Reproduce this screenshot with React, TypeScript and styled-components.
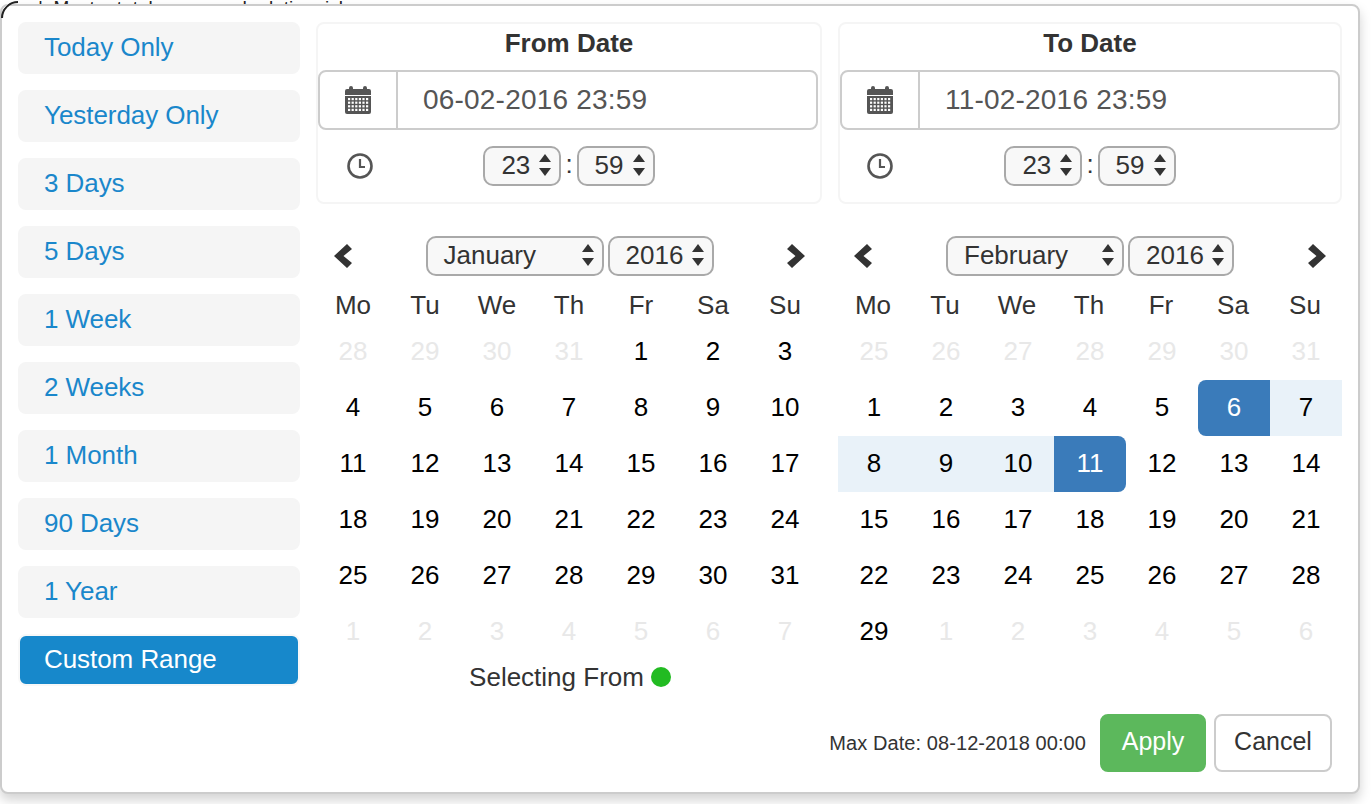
import React from 'react';
import styled, { createGlobalStyle } from 'styled-components';

type DayState = 'off' | 'normal' | 'start' | 'range' | 'end';

interface Day {
  label: number;
  state: DayState;
}

const GlobalStyle = createGlobalStyle`
  html, body {
    margin: 0;
    padding: 0;
    height: 100%;
    background: #fff;
    overflow: hidden;
  }
  body {
    font-family: "Liberation Sans", Arial, sans-serif;
    font-size: 26px;
    color: #333;
  }
`;

const Page = styled.div`
  position: relative;
  height: 804px;
  padding-top: 4px;
  box-sizing: border-box;
`;

/* page content sticking out from under the popup */
const Backdrop = styled.div`
  position: absolute;
  left: 38px;
  top: -3px;
  font-size: 19px;
  line-height: 22px;
  white-space: pre;
  color: #222;
`;

const BackdropBadge = styled.span`
  position: absolute;
  z-index: 1;
  left: 1px;
  top: 1px;
  width: 34px;
  height: 34px;
  box-sizing: border-box;
  border: 2.5px solid transparent;
  border-top-color: #222;
  border-radius: 50%;
  transform: rotate(-45deg);
`;

const Popup = styled.div`
  position: relative;
  width: 1360px;
  height: 790px;
  box-sizing: border-box;
  display: flex;
  gap: 16px;
  padding: 16px;
  background: #fff;
  border: 2px solid #ccc;
  border-radius: 8px;
  box-shadow: 0 6px 12px rgba(0, 0, 0, 0.175);
`;

const Sidebar = styled.div`
  width: 282px;
  flex-shrink: 0;
  display: flex;
  flex-direction: column;
  gap: 16px;
`;

const RangeItem = styled.div<{ $active?: boolean }>`
  height: 52px;
  box-sizing: border-box;
  display: flex;
  align-items: center;
  padding: 0 0 2px 24px;
  letter-spacing: -0.06px;
  border: 2px solid ${({ $active }) => ($active ? '#f8f8f8' : '#f5f5f5')};
  border-radius: 8px;
  background: ${({ $active }) => ($active ? '#1788cb' : '#f5f5f5')};
  color: ${({ $active }) => ($active ? '#fff' : '#1a87cb')};
`;

const Main = styled.div`
  flex: 1;
  display: flex;
  flex-direction: column;
`;

const Calendars = styled.div`
  display: flex;
  gap: 16px;
`;

const Calendar = styled.div<{ $first?: boolean }>`
  width: ${({ $first }) => ($first ? '506px' : '504px')};
  display: flex;
  flex-direction: column;
`;

const DatePanel = styled.div`
  height: 182px;
  box-sizing: border-box;
  border: 2px solid #f5f5f5;
  border-radius: 8px;
  display: flex;
  flex-direction: column;
  margin-bottom: 32px;
`;

const PanelTitle = styled.div`
  height: 46px;
  padding-bottom: 8px;
  box-sizing: border-box;
  display: flex;
  align-items: center;
  justify-content: center;
  font-weight: bold;
`;

const InputGroup = styled.div`
  width: 500px;
  height: 60px;
  box-sizing: border-box;
  display: flex;
  border: 2px solid #ccc;
  border-radius: 8px;
`;

const InputAddon = styled.div`
  width: 76px;
  flex-shrink: 0;
  display: flex;
  align-items: center;
  justify-content: center;
  border-right: 2px solid #ccc;
`;

const InputValue = styled.div`
  flex: 1;
  display: flex;
  align-items: center;
  padding-left: 25px;
  font-size: 28px;
  letter-spacing: 0.2px;
  color: #555;
`;

const TimeRow = styled.div`
  display: grid;
  grid-template-columns: 80px 1fr 80px;
  align-items: center;
  margin-top: 16px;
`;

const ClockCell = styled.div<{ $first?: boolean }>`
  display: flex;
  justify-content: center;
  padding-left: ${({ $first }) => ($first ? '4px' : '0')};
`;

const TimePicker = styled.div`
  display: flex;
  justify-content: center;
  align-items: center;
  gap: 4px;
`;

const Colon = styled.span`
  line-height: 36px;
  padding-bottom: 4px;
`;

const SelectBox = styled.div<{ $width: number }>`
  width: ${({ $width }) => $width}px;
  height: 40px;
  box-sizing: border-box;
  display: flex;
  align-items: center;
  justify-content: space-between;
  padding: 0 8px 2px 16px;
  border: 2px solid #a9a9a9;
  border-radius: 10px;
  background: #f8f8f8;
  color: #333;
`;

const NavRow = styled.div<{ $first?: boolean }>`
  height: 40px;
  display: grid;
  grid-template-columns: 1fr auto 1fr;
  align-items: center;
  padding: ${({ $first }) => ($first ? '0 17px 0 18px' : '0 16px')};
`;

const NavButton = styled.div<{ $end?: boolean }>`
  display: flex;
  justify-content: ${({ $end }) => ($end ? 'flex-end' : 'flex-start')};
`;

const NavSelects = styled.div`
  display: flex;
  gap: 4px;
`;

const DayGrid = styled.div<{ $first?: boolean }>`
  display: grid;
  grid-template-columns: repeat(7, 72px);
  grid-auto-rows: 56px;
  margin-top: 8px;
  margin-left: ${({ $first }) => ($first ? '1px' : '0')};
`;

const WeekRow = styled.div`
  display: grid;
  grid-template-columns: repeat(7, 72px);
  height: 40px;
  margin-top: 9px;
  margin-bottom: -9px;
`;

const WeekDay = styled.div<{ $first?: boolean }>`
  display: flex;
  align-items: center;
  justify-content: center;
  color: #333;
  padding: ${({ $first }) => ($first ? '0 0 0 2px' : '0 2px 0 0')};
`;

const dayBackground: Record<DayState, string> = {
  off: 'transparent',
  normal: 'transparent',
  start: '#3a7bba',
  end: '#3a7bba',
  range: '#e9f2f9',
};

const dayColor: Record<DayState, string> = {
  off: '#e8e8e8',
  normal: '#000',
  start: '#fff',
  end: '#fff',
  range: '#000',
};

const dayRadius: Record<DayState, string> = {
  off: '0',
  normal: '0',
  start: '8px 0 0 8px',
  end: '0 8px 8px 0',
  range: '0',
};

const DayCell = styled.div<{ $state: DayState }>`
  display: flex;
  align-items: center;
  justify-content: center;
  padding-bottom: 2px;
  box-sizing: border-box;
  background: ${({ $state }) => dayBackground[$state]};
  color: ${({ $state }) => dayColor[$state]};
  border-radius: ${({ $state }) => dayRadius[$state]};
`;

const Status = styled.div`
  height: 34px;
  display: flex;
  align-items: center;
  justify-content: center;
  gap: 7px;
  width: 504px;
  padding-left: 2px;
  box-sizing: border-box;
  margin-left: 1px;
`;

const StatusDot = styled.span`
  width: 20px;
  height: 20px;
  border-radius: 50%;
  background: #22bb22;
`;

const Footer = styled.div`
  display: flex;
  justify-content: flex-end;
  align-items: center;
  margin-top: auto;
  margin-bottom: 4px;
  padding-right: 10px;
`;

const MaxDate = styled.span`
  font-size: 20px;
  letter-spacing: 0.08px;
  margin-right: 14px;
`;

const ActionButton = styled.div<{ $primary?: boolean }>`
  height: 58px;
  box-sizing: border-box;
  display: flex;
  align-items: center;
  justify-content: center;
  padding-bottom: 4px;
  font-size: 25px;
  width: ${({ $primary }) => ($primary ? '106px' : '118px')};
  margin-left: ${({ $primary }) => ($primary ? '0' : '8px')};
  border: 2px solid ${({ $primary }) => ($primary ? '#5cb85c' : '#ccc')};
  border-radius: 8px;
  background: ${({ $primary }) => ($primary ? '#5cb85c' : '#fff')};
  color: ${({ $primary }) => ($primary ? '#fff' : '#333')};
`;

const CalendarIcon = () => (
  <svg width="26" height="28" viewBox="0 0 26 28" fill="#555">
    <path d="M2 3h2V2a2 2 0 0 1 4 0v1h10V2a2 2 0 0 1 4 0v1h2a2 2 0 0 1 2 2v4H0V5a2 2 0 0 1 2-2z" />
    <path d="M0 10h26v16a2 2 0 0 1-2 2H2a2 2 0 0 1-2-2z" />
    {[0, 1, 2, 3].map((row) =>
      [0, 1, 2, 3, 4, 5].map((col) => (
        <rect key={`${row}-${col}`} x={3 + col * 3.6} y={12 + row * 3.6} width="2.2" height="2.2" fill="#fff" />
      ))
    )}
  </svg>
);

const ClockIcon = () => (
  <svg width="26" height="26" viewBox="0 0 26 26" fill="none" stroke="#555" strokeWidth="2.6">
    <circle cx="13" cy="13" r="11.5" />
    <path d="M13 6v8h5" strokeWidth="2.2" />
  </svg>
);

const Chevron = ({ right }: { right?: boolean }) => (
  <svg width="19" height="24" viewBox="0 0 19 24" fill="#333">
    <path d={right ? 'M6 0L1 5l8.5 7L1 19l5 5 13-12z' : 'M13 0l5 5-8.5 7 8.5 7-5 5L0 12z'} />
  </svg>
);

const Arrows = () => (
  <svg width="12" height="22" viewBox="0 0 12 22" fill="#333">
    <path d="M6 0l6 8H0zM0 14h12l-6 8z" />
  </svg>
);

const Select = ({ value, width }: { value: string | number; width: number }) => (
  <SelectBox $width={width}>
    <span>{value}</span>
    <Arrows />
  </SelectBox>
);

const range = (from: number, to: number, state: DayState): Day[] =>
  Array.from({ length: to - from + 1 }, (_, i) => ({ label: from + i, state }));

const ranges = [
  'Today Only',
  'Yesterday Only',
  '3 Days',
  '5 Days',
  '1 Week',
  '2 Weeks',
  '1 Month',
  '90 Days',
  '1 Year',
];

const weekDays = ['Mo', 'Tu', 'We', 'Th', 'Fr', 'Sa', 'Su'];

const calendars = [
  {
    title: 'From Date',
    value: '06-02-2016 23:59',
    month: 'January',
    days: [...range(28, 31, 'off'), ...range(1, 31, 'normal'), ...range(1, 7, 'off')],
  },
  {
    title: 'To Date',
    value: '11-02-2016 23:59',
    month: 'February',
    days: [
      ...range(25, 31, 'off'),
      ...range(1, 5, 'normal'),
      ...range(6, 6, 'start'),
      ...range(7, 10, 'range'),
      ...range(11, 11, 'end'),
      ...range(12, 29, 'normal'),
      ...range(1, 6, 'off'),
    ],
  },
];

const App: React.FC = () => (
  <Page>
    <GlobalStyle />
    <Backdrop>{'|  Master total usage and relative risk'}</Backdrop>
    <BackdropBadge />
    <Popup>
      <Sidebar>
        {ranges.map((label) => (
          <RangeItem key={label}>{label}</RangeItem>
        ))}
        <RangeItem $active>Custom Range</RangeItem>
      </Sidebar>
      <Main>
        <Calendars>
          {calendars.map((cal, index) => (
            <Calendar key={cal.title} $first={index === 0}>
              <DatePanel>
                <PanelTitle>{cal.title}</PanelTitle>
                <InputGroup>
                  <InputAddon>
                    <CalendarIcon />
                  </InputAddon>
                  <InputValue>{cal.value}</InputValue>
                </InputGroup>
                <TimeRow>
                  <ClockCell $first={index === 0}>
                    <ClockIcon />
                  </ClockCell>
                  <TimePicker>
                    <Select value={23} width={78} />
                    <Colon>:</Colon>
                    <Select value={59} width={78} />
                  </TimePicker>
                </TimeRow>
              </DatePanel>
              <NavRow $first={index === 0}>
                <NavButton>
                  <Chevron />
                </NavButton>
                <NavSelects>
                  <Select value={cal.month} width={178} />
                  <Select value={2016} width={106} />
                </NavSelects>
                <NavButton $end>
                  <Chevron right />
                </NavButton>
              </NavRow>
              <WeekRow>
                {weekDays.map((d) => (
                  <WeekDay key={d} $first={index === 0}>
                    {d}
                  </WeekDay>
                ))}
              </WeekRow>
              <DayGrid $first={index === 0}>
                {cal.days.map((day, i) => (
                  <DayCell key={i} $state={day.state}>
                    {day.label}
                  </DayCell>
                ))}
              </DayGrid>
              {index === 0 && (
                <Status>
                  Selecting From
                  <StatusDot />
                </Status>
              )}
            </Calendar>
          ))}
        </Calendars>
        <Footer>
          <MaxDate>Max Date: 08-12-2018 00:00</MaxDate>
          <ActionButton $primary>Apply</ActionButton>
          <ActionButton>Cancel</ActionButton>
        </Footer>
      </Main>
    </Popup>
  </Page>
);

export default App;
